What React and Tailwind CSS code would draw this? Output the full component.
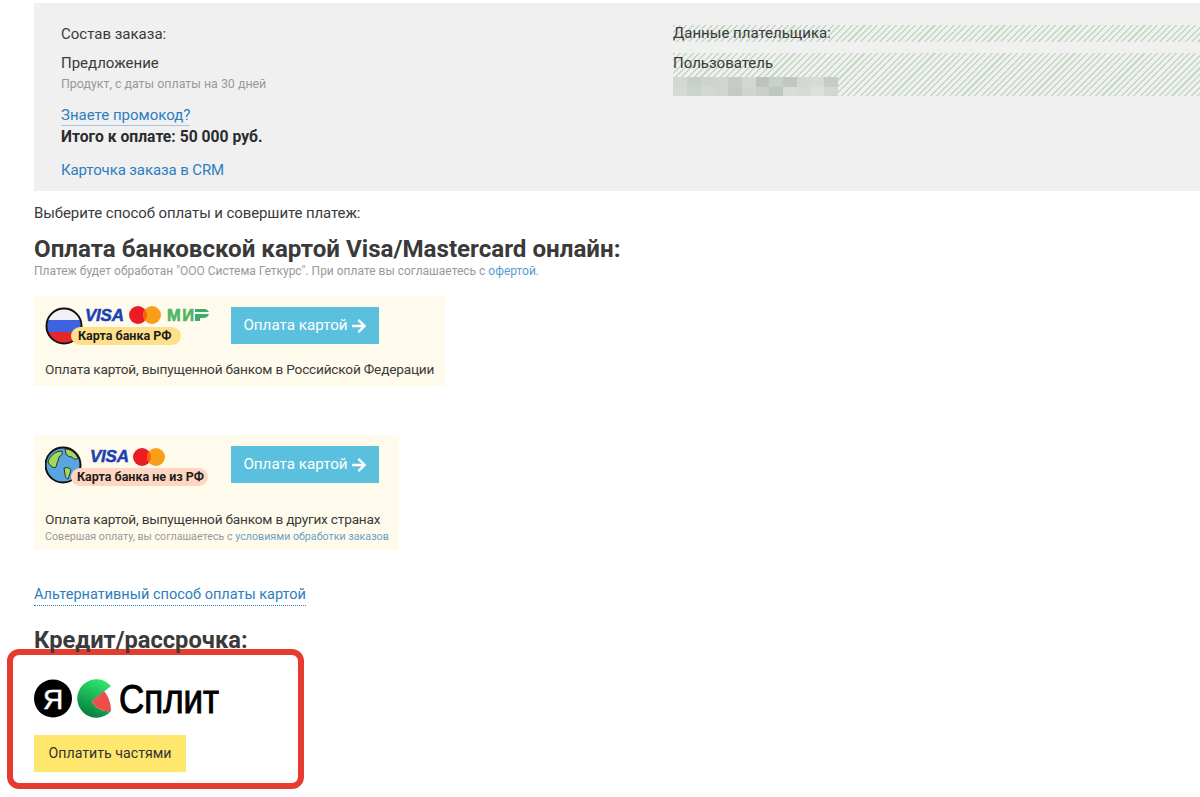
import React from 'react';
import { FaArrowRight } from 'react-icons/fa';

const blurTop = ['bg-[#d3d8d3]', 'bg-[#c8cfc9]', 'bg-[#cdd3ce]', 'bg-[#cfd5d0]', 'bg-[#c6cdc7]', 'bg-[#d2d7d3]', 'bg-[#bcc3bd]', 'bg-[#c9cfca]', 'bg-[#c1c8c2]', 'bg-[#d3d8d4]', 'bg-[#d6dbd6]', 'bg-[#c5cbc6]'];
const blurBottom = ['bg-[#d6dad6]', 'bg-[#ccd2cd]', 'bg-[#d3d8d4]', 'bg-[#d1d6d1]', 'bg-[#c3cac4]', 'bg-[#d0d5d0]', 'bg-[#c9cfca]', 'bg-[#bfc6c0]', 'bg-[#d9ddd9]', 'bg-[#d7dbd7]', 'bg-[#dcdfdc]', 'bg-[#d2d7d2]'];

const hatch = 'bg-[repeating-linear-gradient(135deg,#c4d8c4_0,#c4d8c4_1.5px,#f0f0f0_1.5px,#f0f0f0_4.5px)]';

function Mastercard({ x, y }) {
  return (
    <g>
      <circle cx={x} cy={y} r="9" fill="#eb1c26" />
      <circle cx={x + 14} cy={y} r="9" fill="#f79e1b" />
      <path d={`M${x + 7} ${y - 5.6}a9 9 0 0 1 0 11.2a9 9 0 0 1 0-11.2z`} fill="#ff5f00" />
    </g>
  );
}

function VisaText({ x, y }) {
  return (
    <text x={x} y={y} fontFamily="Liberation Sans" fontSize="17" fontWeight="700" fontStyle="italic" fill="#1c3fb7" stroke="#1c3fb7" strokeWidth="0.5" textLength="39">
      VISA
    </text>
  );
}

function RussiaLogo() {
  return (
    <svg width="170" height="44" viewBox="0 0 170 44" className="shrink-0">
      <clipPath id="flagClip"><circle cx="19" cy="22" r="17" /></clipPath>
      <g clipPath="url(#flagClip)">
        <rect x="0" y="4" width="38" height="12" fill="#f1f1f4" />
        <rect x="0" y="16" width="38" height="12" fill="#3f62e0" />
        <rect x="0" y="28" width="38" height="12" fill="#e5262a" />
      </g>
      <circle cx="19" cy="22" r="17.5" fill="none" stroke="#111" strokeWidth="2" />
      <VisaText x={40} y={17} />
      <Mastercard x={93} y={11} />
      <text x={122} y={17} fontFamily="Liberation Sans" fontSize="16.5" fontWeight="700" fill="#4fb663" stroke="#4fb663" strokeWidth="0.6" textLength="27">МИ</text>
      <path d="M150 5h10a5 5 0 0 1 4 3h-14zM150 10h14c-1 3-3 4-6 4h-3v3h-5z" fill="#3dab6b" />
      <rect x="26" y="23" width="110" height="18" rx="9" fill="#ffe08a" />
      <text x="33" y="36" fontFamily="Roboto" fontSize="12.5" fontWeight="700" fill="#1d1d1d">Карта банка РФ</text>
    </svg>
  );
}

function WorldLogo() {
  return (
    <svg width="170" height="44" viewBox="0 0 170 44" className="shrink-0">
      <circle cx="18" cy="22" r="17.5" fill="#5aa5e0" stroke="#111" strokeWidth="2" />
      <path d="M3 19c2-7 8-11 14-11 1 3-1 5-3 6l-1 4c-2 3-1 6-3 7-3-1-6-3-7-6z" fill="#a2d95a" stroke="#111" strokeWidth="0.8" />
      <path d="M20 6c5 0 10 3 13 9-2 2-5 1-6-1-2 0-5-1-6-3z" fill="#a2d95a" stroke="#111" strokeWidth="0.8" />
      <path d="M19 25c3-1 6 0 7 2l-3 9c-2 0-3-3-3-5z" fill="#a2d95a" stroke="#111" strokeWidth="0.8" />
      <VisaText x={45} y={19} />
      <Mastercard x={97} y={14} />
      <rect x="26" y="25" width="137" height="18" rx="9" fill="#fed6c1" />
      <text x="32" y="38" fontFamily="Roboto" fontSize="12.5" fontWeight="700" fill="#1d1d1d">Карта банка не из РФ</text>
    </svg>
  );
}

function SplitLogo() {
  return (
    <svg width="225" height="40" viewBox="0 0 225 40" className="block">
      <defs>
        <linearGradient id="splitGreen" x1="0.7" y1="0" x2="0.3" y2="1">
          <stop offset="0" stopColor="#2ee96d" />
          <stop offset="1" stopColor="#067a3c" />
        </linearGradient>
      </defs>
      <circle cx="19" cy="19.5" r="19" fill="#000" />
      <text x="19" y="30" textAnchor="middle" fontFamily="Liberation Sans" fontSize="28" fill="#fff" stroke="#fff" strokeWidth="0.5">Я</text>
      <path d="M77 7A19.2 19.2 0 1 0 77 32C68 33 61 29 58 22Z" fill="url(#splitGreen)" />
      <path d="M58 22L70 12C75 18 77 25 77 32C68 33 61 29 58 22Z" fill="#ef4d4b" />
      <text transform="translate(85 34) scale(0.874 1)" fontFamily="Liberation Sans" fontSize="40" fill="#000" stroke="#000" strokeWidth="1">Сплит</text>
    </svg>
  );
}

function PayButton() {
  return (
    <button className="flex h-[37px] w-[148px] shrink-0 items-center justify-center gap-[3px] bg-[#5bc0de] text-[15.2px] text-white">
      Оплата картой
      <FaArrowRight className="h-[16px] w-[16px]" />
    </button>
  );
}

export default function App() {
  return (
    <div className="h-[797px] overflow-hidden bg-white pl-[34px] pt-[3px] font-['Roboto',sans-serif] text-[15px] text-[#3a3a3a]">
      {/* Order summary */}
      <section className="flex h-[188px] bg-[#f0f0f0] pl-[27px]">
        <div className="w-[612px] pt-[21px]">
          <p className="leading-[20px]">Состав заказа:</p>
          <p className="mt-[9px] leading-[20px]">Предложение</p>
          <p className="mt-[1px] text-[12.4px] leading-[20px] text-[#999]">Продукт, с даты оплаты на 30 дней</p>
          <a className="mt-[11px] inline-block border-b border-[#a9c6de] text-[15px] leading-[20px] text-[#2b7ec1]">Знаете промокод?</a>
          <p className="text-[15.7px] font-bold leading-[20px] text-[#2b2b2b]">Итого к оплате: 50 000 руб.</p>
          <a className="mt-[13px] block tracking-[-0.1px] leading-[20px] text-[#2b7ec1]">Карточка заказа в CRM</a>
        </div>
        <div className="flex-1 pt-[22px]">
          <div className={`h-[17px] leading-[17px] ${hatch}`}>Данные плательщика:</div>
          <div className={`mt-[11px] h-[43px] ${hatch}`}>
            <p className="h-[24px] leading-[20px]">Пользователь</p>
            <div className="w-[165px]">
              <div className="flex h-[10px]">
                {blurTop.map((c, i) => <div key={i} className={`h-full flex-1 ${c}`} />)}
              </div>
              <div className="flex h-[9px]">
                {blurBottom.map((c, i) => <div key={i} className={`h-full flex-1 ${c}`} />)}
              </div>
            </div>
          </div>
        </div>
      </section>

      <p className="mt-[12px] tracking-[-0.1px] leading-[20px]">Выберите способ оплаты и совершите платеж:</p>
      <h2 className="mt-[12px] text-[24.15px] font-bold leading-[28px]">Оплата банковской картой Visa/Mastercard онлайн:</h2>
      <p className="mt-[1px] text-[12px] leading-[14px] text-[#999]">
        Платеж будет обработан "ООО Система Геткурс". При оплате вы соглашаетесь с <a className="text-[#5a9bd0]">офертой</a>.
      </p>

      {/* Russian cards */}
      <div className="mt-[18px] h-[90px] w-[411px] bg-[#fffbec] px-[11px] pt-[8px]">
        <div className="flex items-start gap-[16px]">
          <RussiaLogo />
          <div className="pt-[3px]"><PayButton /></div>
        </div>
        <p className="mt-[11px] whitespace-nowrap text-[13.65px] tracking-[-0.2px] leading-[20px]">Оплата картой, выпущенной банком в Российской Федерации</p>
      </div>

      {/* Foreign cards */}
      <div className="mt-[49px] h-[115px] w-[365px] bg-[#fffbec] px-[11px] pt-[8px]">
        <div className="flex items-start gap-[16px]">
          <WorldLogo />
          <div className="pt-[3px]"><PayButton /></div>
        </div>
        <p className="mt-[22px] whitespace-nowrap text-[13.65px] tracking-[-0.2px] leading-[20px]">Оплата картой, выпущенной банком в других странах</p>
        <p className="whitespace-nowrap text-[10.7px] leading-[16px] text-[#999]">
          Совершая оплату, вы соглашаетесь с <a className="text-[#6b9fc4]">условиями обработки заказов</a>
        </p>
      </div>

      <a className="mt-[35px] inline-block border-b border-dotted border-[#2b7ec1] text-[14.5px] leading-[20px] text-[#2b7ec1]">Альтернативный способ оплаты картой</a>

      <h2 className="mt-[20px] text-[23.7px] font-bold leading-[28px]">Кредит/рассрочка:</h2>

      {/* Split */}
      <div className="-ml-[27px] mt-[-5px] h-[140px] w-[297px] rounded-[12px] border-[6px] border-[#e53c2f] pl-[21px] pt-[24px]">
        <SplitLogo />
        <button className="mt-[16px] block h-[37px] w-[152px] bg-[#ffe66d] text-[14.2px] text-[#333]">Оплатить частями</button>
      </div>
    </div>
  );
}
